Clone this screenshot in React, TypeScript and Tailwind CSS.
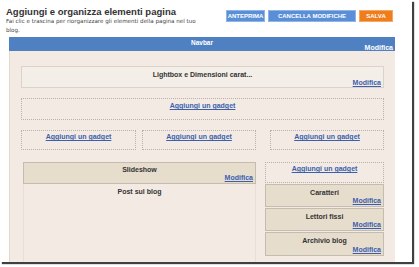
import React from "react";

interface Gadget {
  title: string;
  h: string;
}

const sidebar: Gadget[] = [
  { title: "Caratteri", h: "h-[23px]" },
  { title: "Lettori fissi", h: "h-[23px]" },
  { title: "Archivio blog", h: "h-[24px]" },
];

function Modifica({ white }: { white?: boolean }) {
  return (
    <div
      className={`text-right text-[7px] leading-[8px] font-bold ${
        white ? "text-white" : "text-[#3b5fad]"
      }`}
    >
      <span className="underline">Modifica</span>
    </div>
  );
}

function AddGadget({ className }: { className: string }) {
  return (
    <div
      className={`border border-dotted border-[#b9b2aa] text-center text-[7px] leading-[8px] font-bold text-[#3b5fad] ${className}`}
    >
      <span className="underline">Aggiungi un gadget</span>
    </div>
  );
}

function GadgetBox({ title, h }: Gadget) {
  return (
    <div
      className={`${h} border border-[#c5bcaf] bg-[#e6ddcd] flex flex-col justify-between px-[2px] pt-[4px] pb-[1px]`}
    >
      <div className="text-center text-[7px] leading-[8px] font-bold text-[#333]">
        {title}
      </div>
      <Modifica />
    </div>
  );
}

export default function App() {
  return (
    <div className="w-[419px] h-[267px] bg-white overflow-hidden font-['Liberation_Sans',Arial,sans-serif]">
      <div className="w-[412px] h-[262px] bg-white flex flex-col shadow-[2px_2px_1px_rgba(0,0,0,0.75)]">
        {/* Intestazione */}
        <div className="h-[37px] flex justify-between pl-[6px] pr-[19px] pt-[6px]">
          <div className="w-[196px]">
            <h1 className="text-[9.5px] leading-[11px] font-bold text-[#333] whitespace-nowrap">
              Aggiungi e organizza elementi pagina
            </h1>
            <p className="text-[5.6px] leading-[9px] text-[#444] font-['DejaVu_Sans',sans-serif]">
              Fai clic e trascina per riorganizzare gli elementi della pagina nel
              tuo blog.
            </p>
          </div>
          <div className="flex gap-[3px] mt-[4px] h-[12px] text-[6px] font-bold text-white">
            <button className="w-[39px] bg-[#5a8fd8] border border-[#8fb4e6]">
              ANTEPRIMA
            </button>
            <button className="w-[88px] bg-[#5a8fd8] border border-[#8fb4e6]">
              CANCELLA MODIFICHE
            </button>
            <button className="w-[34px] bg-[#ef7d1c] border border-[#f4a866]">
              SALVA
            </button>
          </div>
        </div>

        {/* Navbar */}
        <div className="mx-[9px] w-[386px] h-[14px] bg-[#4f80c2] flex flex-col px-[2px] pt-[2px]">
          <div className="text-center text-white text-[6.5px] leading-[8px] font-bold">
            Navbar
          </div>
          <div className="-mt-[3px]">
            <Modifica white />
          </div>
        </div>

        {/* Area layout */}
        <div className="mx-[9px] w-[386px] flex-1 bg-[#f3ebe3] border-l border-[#e2d8ce] px-[11px] pt-[15px] flex flex-col">
          <div className="h-[22px] border border-[#dbd3ca] bg-[#f4eee8] flex flex-col justify-between px-[2px] pt-[4px] pb-[1px]">
            <div className="text-center text-[7px] leading-[8px] font-bold text-[#333]">
              Lightbox e Dimensioni carat...
            </div>
            <Modifica />
          </div>

          <AddGadget className="h-[22px] mt-[10px] pt-[3px]" />

          <div className="flex mt-[10px]">
            <AddGadget className="w-[115px] h-[20px] pt-[2px]" />
            <AddGadget className="w-[114px] h-[20px] pt-[2px] ml-[6px]" />
            <AddGadget className="w-[114px] h-[20px] pt-[2px] ml-auto" />
          </div>

          <div className="flex flex-1 mt-[12px] pl-[2px]">
            <div className="w-[233px] flex flex-col border-x border-[#e8dfd5]">
              <div className="h-[22px] border border-[#c5bcaf] bg-[#e6ddcd] flex flex-col justify-between px-[2px] pt-[3px] pb-[1px] -mx-px">
                <div className="text-center text-[7px] leading-[8px] font-bold text-[#333]">
                  Slideshow
                </div>
                <Modifica />
              </div>
              <div className="text-center text-[7px] leading-[8px] font-bold text-[#333] pt-[4px]">
                Post sul blog
              </div>
            </div>

            <div className="w-[119px] ml-auto flex flex-col gap-[1px]">
              <AddGadget className="h-[21px] pt-[2px]" />
              {sidebar.map((g) => (
                <GadgetBox key={g.title} title={g.title} h={g.h} />
              ))}
            </div>
          </div>
        </div>
      </div>
    </div>
  );
}
